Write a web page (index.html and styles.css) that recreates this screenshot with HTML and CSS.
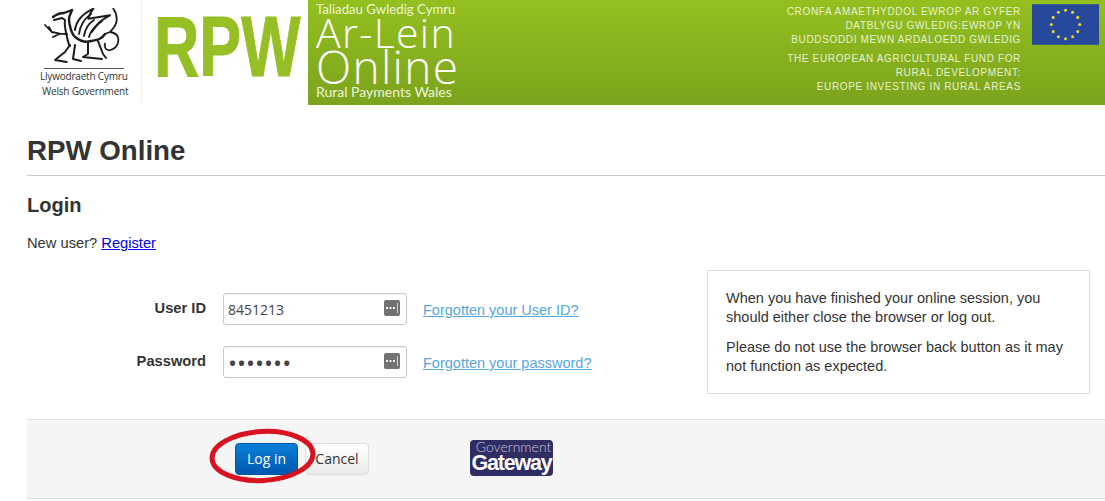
FILE: index.html
```html
<!DOCTYPE html>
<html lang="en">
<head>
  <meta charset="UTF-8" />
  <title>RPW Online</title>
  <link rel="stylesheet" href="styles.css">
</head>
<body>
  <div class="banner">
    <div class="banner-left">
      <div class="gov-logo">
        <svg class="dragon" width="80" height="58" viewBox="0 0 80 58" fill="none" stroke="#1c1c1c" stroke-width="1.4" stroke-linecap="round" stroke-linejoin="round">
          <path stroke-width="2.4" d="M9 9 C13 6 17 5 20 5 L28 2 L26 7 C24 11 25 14 26 18 C27 23 29 27 31 29 C36 33 41 35 47 33 C52 32 57 32 61 26"/>
          <path stroke-width="2" d="M10 12 L18 10 L21 12 C20 18 22 24 23 29 C24 33 24 36 26 38"/>
          <path stroke-width="1.8" d="M23 26 L16 25.7 L7.7 24 L1 17 M7.7 24 L5 19 M16 25.7 L9 29"/>
          <path stroke-width="2" d="M26 37 L21 44 L11 52 L22.7 54 M31 37 L29 51 L37 53"/>
          <path stroke-width="2" d="M44 35 L44 46 L39 49 L58 51 M54 33 L59 46 L62 50"/>
          <path stroke-width="1.8" d="M61 26 L66 24 C71 19 73 15 72.7 10.7 C72.5 6 71 3 69.3 0.7 M66 24 C72 25 75 28 74.3 33 C74 38 70 42 65 42.3 C62 42 60 39 61 35.7"/>
          <path stroke-width="2" d="M31 22 C32 14 36 7 49.3 0.7 C46 5 45 8 44.3 10.7 L66 7.3 C59 11 55 14 52.7 17.3 L47.7 24"/>
          <path stroke-width="1.8" d="M35 26 C36 18 40 11 47 6 M40 28 C41 21 44 16 50 12 M45 29 C46 24 50 19 58 13"/>
        </svg>
        <div class="gov-name">Llywodraeth Cymru</div>
        <div class="gov-name gov-name-en">Welsh Government</div>
      </div>
      <div class="rpw-mark"><span>RPW</span></div>
    </div>
    <div class="banner-green">
      <div class="online-logo">
        <div class="online-top">Taliadau Gwledig Cymru</div>
        <div class="online-big">Ar-Lein</div>
        <div class="online-big online-en">Online</div>
        <div class="online-bottom">Rural Payments Wales</div>
      </div>
      <div class="eu-text">
        <p>CRONFA AMAETHYDDOL EWROP AR GYFER<br>DATBLYGU GWLEDIG:EWROP YN<br>BUDDSODDI MEWN ARDALOEDD GWLEDIG</p>
        <p>THE EUROPEAN AGRICULTURAL FUND FOR<br>RURAL DEVELOPMENT:<br>EUROPE INVESTING IN RURAL AREAS</p>
      </div>
      <svg class="eu-flag" width="67" height="41" viewBox="0 0 66 40">
        <rect width="66" height="40" fill="#26499b"/>
        <g fill="#e6d53a">
          <circle cx="33" cy="6" r="1.5"/><circle cx="40" cy="7.9" r="1.5"/><circle cx="45.1" cy="13" r="1.5"/>
          <circle cx="47" cy="20" r="1.5"/><circle cx="45.1" cy="27" r="1.5"/><circle cx="40" cy="32.1" r="1.5"/>
          <circle cx="33" cy="34" r="1.5"/><circle cx="26" cy="32.1" r="1.5"/><circle cx="20.9" cy="27" r="1.5"/>
          <circle cx="19" cy="20" r="1.5"/><circle cx="20.9" cy="13" r="1.5"/><circle cx="26" cy="7.9" r="1.5"/>
        </g>
      </svg>
    </div>
  </div>

  <div class="content">
    <h1>RPW Online</h1>
    <h2>Login</h2>
    <p class="new-user">New user? <a href="#">Register</a></p>

    <div class="login-row">
      <form class="login-form">
        <label for="userId">User ID</label>
        <div class="field">
          <input id="userId" type="text" value="8451213">
          <svg class="key-icon" width="16" height="16" viewBox="0 0 16 16">
            <rect width="16" height="16" rx="2" fill="#727272"/>
            <path d="M2 7h2v2H2zM5.5 7h2v2h-2zM9 7h2v2H9z" fill="#f2f2f2"/>
            <rect x="13" y="3" width="1" height="10" fill="#cfcfcf"/>
          </svg>
        </div>
        <a class="help-link" href="#">Forgotten your User ID?</a>

        <label for="password">Password</label>
        <div class="field">
          <input id="password" class="password" type="password" value="1234567">
          <svg class="key-icon" width="16" height="16" viewBox="0 0 16 16">
            <rect width="16" height="16" rx="2" fill="#727272"/>
            <path d="M2 7h2v2H2zM5.5 7h2v2h-2zM9 7h2v2H9z" fill="#f2f2f2"/>
            <rect x="13" y="3" width="1" height="10" fill="#cfcfcf"/>
          </svg>
        </div>
        <a class="help-link" href="#">Forgotten your password?</a>
      </form>

      <div class="notice">
        <p>When you have finished your online session, you should either close the browser or log out.</p>
        <p>Please do not use the browser back button as it may not function as expected.</p>
      </div>
    </div>

    <div class="actions">
      <div class="buttons">
        <button class="btn btn-primary" type="button">Log in</button>
        <button class="btn" type="button">Cancel</button>
        <svg class="ring" width="112" height="80" viewBox="0 0 112 80" fill="none">
          <ellipse cx="55.5" cy="37" rx="50.5" ry="24.5" stroke="#d8121f" stroke-width="5" transform="rotate(-3 55.5 37)"/>
        </svg>
      </div>
      <div class="gateway">
        <span class="gateway-top">Government</span>
        <span class="gateway-main">Gateway</span>
      </div>
    </div>
  </div>
</body>
</html>
```

FILE: styles.css
```css
body {
  margin: 0;
  font-family: "Liberation Sans", Arial, sans-serif;
  font-size: 14.5px;
  color: #333;
  background: white;
  overflow: hidden;
}

.banner {
  display: flex;
  height: 105px;
}

.banner-left {
  display: flex;
  width: 308px;
  flex-shrink: 0;
}

.gov-logo {
  width: 141px;
  height: 102px;
  border-right: 1px solid #eee;
}

.dragon {
  display: block;
  margin: 8px 0 0 44px;
  padding-bottom: 2px;
  border-bottom: 1px solid #555;
}

.gov-name {
  padding-left: 40px;
  font-family: "Open Sans", sans-serif;
  font-size: 10px;
  line-height: 15px;
  letter-spacing: -0.2px;
  color: #333;
  white-space: nowrap;
}

.gov-name-en {
  padding-left: 42px;
}

.rpw-mark {
  width: 154px;
  padding-left: 12px;
  color: #95bf24;
  font-weight: bold;
  font-size: 86px;
  line-height: 93px;
  white-space: nowrap;
  -webkit-text-stroke: 1px #95bf24;
}

.rpw-mark span {
  display: inline-block;
  width: 143px;
  transform: scaleX(0.73);
  transform-origin: left center;
}

.banner-green {
  flex: 1;
  display: flex;
  background: linear-gradient(#93c01f, #7ba31d);
  color: #fff;
}

.online-logo {
  width: 470px;
  padding-left: 8px;
  font-family: "Open Sans", sans-serif;
  flex-shrink: 0;
  box-sizing: border-box;
}

.online-top {
  font-family: Lato, sans-serif;
  font-size: 13.2px;
  line-height: 15px;
  padding-top: 2px;
  color: #eef5d8;
}

.online-big {
  font-weight: 300;
  font-size: 41px;
  line-height: 31px;
  letter-spacing: 1.3px;
  white-space: nowrap;
}

.online-en {
  font-size: 46px;
  line-height: 36px;
}

.online-bottom {
  font-family: Lato, sans-serif;
  font-size: 14px;
  line-height: 15px;
  color: #eef5d8;
}

.eu-text {
  width: 243px;
  padding-top: 5px;
  text-align: right;
  font-size: 10px;
  line-height: 14px;
  letter-spacing: 0.65px;
  color: #e8f1cf;
  white-space: nowrap;
  flex-shrink: 0;
}

.eu-text p {
  margin: 0 0 5px;
}

.eu-flag {
  margin: 4px 0 0 11px;
}

.content {
  padding-left: 27px;
}

h1 {
  margin: 0;
  padding: 30px 0 8px;
  font-size: 27.7px;
  line-height: 32px;
  color: #333;
  border-bottom: 1px solid #ccc;
}

h2 {
  margin: 0;
  padding-top: 17px;
  font-size: 20px;
  line-height: 24px;
  color: #333;
}

.new-user {
  margin: 16px 0 0;
  font-size: 14.7px;
  line-height: 20px;
}

.new-user a {
  color: #0000ee;
}

.login-row {
  display: flex;
  margin-top: 17px;
  height: 149px;
}

.login-form {
  display: grid;
  grid-template-columns: 180px 184px auto;
  grid-auto-rows: 32px;
  row-gap: 21px;
  column-gap: 16px;
  align-items: center;
  align-content: start;
  width: 680px;
  padding-top: 23px;
  box-sizing: border-box;
}

.login-form label {
  margin-right: 1px;
  padding-bottom: 2px;
  text-align: right;
  font-size: 14.7px;
  font-weight: bold;
}

.field {
  position: relative;
  height: 32px;
}

.field input {
  width: 100%;
  height: 32px;
  box-sizing: border-box;
  padding: 0 4px;
  border: 1px solid #c8c8c8;
  border-radius: 3px;
  font-family: "Open Sans", sans-serif;
  font-size: 14px;
  color: #444;
  box-shadow: inset 0 1px 1px rgba(0, 0, 0, 0.05);
}

.field .password {
  font-size: 24px;
}

.key-icon {
  position: absolute;
  top: 7px;
  right: 7px;
}

.help-link {
  padding-top: 2px;
  color: #57a6dc;
}

.notice {
  width: 383px;
  height: 124px;
  box-sizing: border-box;
  padding: 18px 18px 0;
  border: 1px solid #ddd;
  line-height: 19px;
}

.notice p {
  margin: 0 0 11px;
}

.actions {
  display: flex;
  align-items: center;
  height: 80px;
  box-sizing: border-box;
  padding-left: 208px;
  background: #f5f5f5;
  border-top: 1px solid #ddd;
  border-bottom: 1px solid #ddd;
}

.buttons {
  position: relative;
  display: flex;
  gap: 7px;
  width: 235px;
  margin-top: -1px;
}

.btn {
  width: 64px;
  height: 32px;
  padding: 0;
  border: 1px solid #ddd;
  border-radius: 4px;
  background: linear-gradient(#fff, #eaeaea);
  font-family: "Open Sans", sans-serif;
  font-size: 14px;
  color: #333;
}

.btn-primary {
  width: 63px;
  border-color: #0058a8;
  background: linear-gradient(#0a80d8, #0057ae);
  color: #fff;
}

.ring {
  position: absolute;
  left: -28px;
  top: -24px;
}

.gateway {
  display: flex;
  flex-direction: column;
  align-items: center;
  width: 83px;
  height: 36px;
  margin-top: -2px;
  background: #2f2d63;
  border-radius: 4px;
  color: #fff;
}

.gateway-top {
  padding-left: 4px;
  font-family: Lato, sans-serif;
  font-weight: 300;
  font-size: 14px;
  line-height: 13px;
  color: #c4c3da;
}

.gateway-main {
  font-size: 21.5px;
  font-weight: bold;
  line-height: 20px;
  letter-spacing: -1.2px;
}
```
